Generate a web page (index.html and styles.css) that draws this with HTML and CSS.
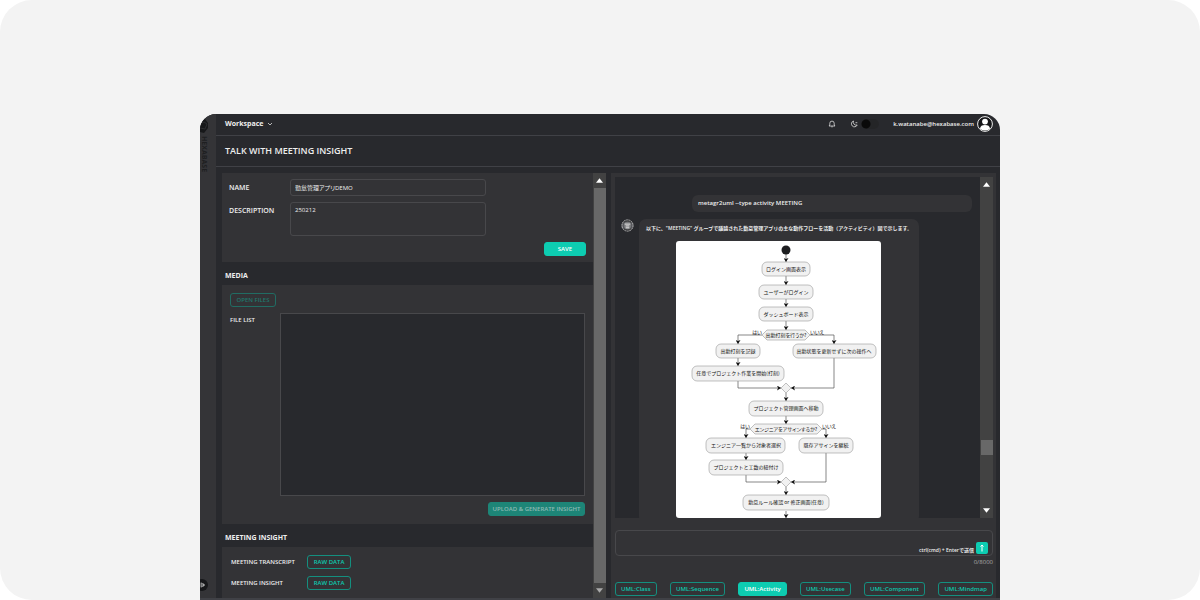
FILE: index.html
```html
<!DOCTYPE html>
<html lang="ja">
<head>
<meta charset="utf-8">
<title>Talk with Meeting Insight</title>
<link rel="stylesheet" href="styles.css">
</head>
<body>
<div class="stage">
<div class="app">
  <aside class="rail">
    <svg class="rail-logo" viewBox="0 0 8 14" aria-hidden="true"><path d="M0 2 5 0 8 4v5l-4 5-4-1z" fill="#17181a"/><path d="M0 5l4-2 3 2M0 9l5 1 2-5" fill="none" stroke="#2c2d30"/></svg>
    <span class="rail-name">HEXABASE</span>
    <button class="rail-toggle" aria-label="Expand menu"><svg viewBox="0 0 10 10"><path d="M3 5h5M5.500 2.500L8 5 5.500 7.500M4 2v2M4 6v2" fill="none" stroke="#eee"/></svg></button>
  </aside>
  <div class="main">
    <header class="topbar">
      <button class="workspace">Workspace <svg viewBox="0 0 6 6"><path d="M1 2l2 2 2-2" fill="none" stroke="#ddd" stroke-width=".8"/></svg></button>
      <div class="account">
        <button class="icon bell" aria-label="Notifications"><svg viewBox="0 0 8 8"><path d="M1 6h6L6.200 5V3.300a2.200 2.200 0 0 0-4.400 0V5zM3.300 6.800h1.400" fill="none" stroke="#ddd" stroke-width=".8"/></svg></button>
        <svg class="moon" viewBox="0 0 8 8" aria-hidden="true"><path d="M3.500 1a3 3 0 1 0 3.700 4A3 3 0 0 1 3.500 1zM5.500 2.700h1.800" fill="none" stroke="#ddd" stroke-width=".8"/></svg>
        <input class="switch" type="checkbox" aria-label="Light theme">
        <a class="mail" href="#">k.watanabe@hexabase.com</a>
        <svg class="user" viewBox="0 0 16 16" aria-hidden="true"><circle cx="8" cy="8" r="7.400" fill="#151618" stroke="#eee"/><circle cx="8" cy="5.600" r="2.900" fill="#fff"/><path d="M3 12.700C3.300 10 5 9 8 9s4.700 1 5 3.700C10.500 15 5.500 15 3 12.700z" fill="#fff"/></svg>
      </div>
    </header>
    <h1 class="title">TALK WITH MEETING INSIGHT</h1>
    <div class="panes">
      <section class="left">
        <div class="scroll">
          <form class="card info">
            <label for="name">NAME</label><input class="field" id="name" value="勤怠管理アプリDEMO">
            <label for="desc">DESCRIPTION</label><textarea class="field area" id="desc">250212</textarea>
            <button class="btn solid save" type="button">SAVE</button>
          </form>
          <h2>MEDIA</h2>
          <div class="card media">
            <button class="btn muted" type="button">OPEN FILES</button>
            <div class="files"><span class="files-label">FILE LIST</span><div class="filebox"></div></div>
            <button class="btn solid dim upload" type="button">UPLOAD &amp; GENERATE INSIGHT</button>
          </div>
          <h2>MEETING INSIGHT</h2>
          <div class="card results">
            <span>MEETING TRANSCRIPT</span><button class="btn" type="button">RAW DATA</button>
            <span>MEETING INSIGHT</span><button class="btn" type="button">RAW DATA</button>
          </div>
        </div>
        <div class="bar" aria-hidden="true">
          <svg viewBox="0 0 8 5"><path d="M4 0l4 5H0z" fill="#fff"/></svg>
          <i class="thumb long"></i>
          <svg viewBox="0 0 8 5"><path d="M0 0h8L4 5z" fill="#aaa"/></svg>
        </div>
      </section>
      <section class="right">
        <div class="chat">
          <div class="log">
            <p class="mine">metagr2uml --type activity MEETING</p>
            <div class="reply">
              <svg class="bot" viewBox="0 0 14 14" aria-hidden="true"><circle cx="7" cy="7" r="6" fill="#55565a" stroke="#c8c8c8" stroke-dasharray="2 .6"/><circle cx="7" cy="7" r="4" fill="#77787a"/><path d="M4 5.500h6M5 7.500h4M5 9.500h4" stroke="#eee"/><path d="M3 3.500c2-2 6-2 8 0M3 10.500c2 2 6 2 8 0" fill="none" stroke="#333"/></svg>
              <div class="bubble">
                <p>以下に、"MEETING" グループで議論された勤怠管理アプリの主な動作フローを活動（アクティビティ）図で示します。</p>
                <svg class="diagram" viewBox="676 241 205 277" role="img" aria-label="アクティビティ図">
                  <defs><marker id="a" viewBox="0 0 4 5" refX="4" refY="2.500" markerWidth="5" markerHeight="5" markerUnits="userSpaceOnUse" orient="auto"><path d="M0 0l4 2.500L0 5l1-2.500z" fill="#111"/></marker></defs>
                  <g class="wire">
                    <path d="M786 254v8"/><path d="M786 276v9"/><path d="M786 299v8"/><path d="M786 321v9"/>
                    <path d="M762 335h-24v9"/><path d="M810 335h24v9"/><path d="M738 358v8"/><path d="M738 381v7h43"/><path d="M834 358v30h-43"/>
                    <path d="M786 393v8"/><path d="M786 416v8"/><path d="M750 429h-4v9"/><path d="M822 429h4v9"/><path d="M746 453v7"/><path d="M746 475v7h35"/><path d="M826 453v29h-35"/>
                    <path d="M786 487v8"/><path d="M786 511v7"/>
                  </g>
                  <circle cx="786" cy="250" r="4.500" fill="#1d1e20"/>
                  <g class="node">
                    <rect x="762" y="262" width="48" height="14" rx="5"/><rect x="759" y="285" width="54" height="14" rx="5"/><rect x="759" y="307" width="54" height="14" rx="5"/>
                    <path d="M767 330h38l5 5-5 5h-38l-5-5z"/>
                    <rect x="716" y="344" width="44" height="14" rx="5"/><rect x="793" y="344" width="83" height="14" rx="5"/><rect x="692" y="366" width="92" height="15" rx="5"/>
                    <path d="M786 383l5 5-5 5-5-5z"/><rect x="749" y="401" width="74" height="15" rx="5"/>
                    <path d="M755 424h62l5 5-5 5h-62l-5-5z"/>
                    <rect x="706" y="438" width="79" height="15" rx="5"/><rect x="799" y="438" width="54" height="15" rx="5"/><rect x="709" y="460" width="74" height="15" rx="5"/>
                    <path d="M786 477l5 5-5 5-5-5z"/><rect x="743" y="495" width="86" height="15" rx="5"/>
                  </g>
                  <g class="label">
                    <text x="786" y="271">ログイン画面表示</text><text x="786" y="294">ユーザーがログイン</text><text x="786" y="316">ダッシュボード表示</text>
                    <text class="cond" x="786" y="337">出勤打刻を行うか?</text><text class="cond" x="757" y="334">はい</text><text class="cond" x="817" y="334">いいえ</text>
                    <text x="738" y="353">出勤打刻を記録</text><text x="834" y="353">出勤状態を更新せずに次の操作へ</text><text x="738" y="375">任意でプロジェクト作業を開始(打刻)</text>
                    <text x="786" y="410">プロジェクト管理画面へ移動</text>
                    <text class="cond" x="786" y="431">エンジニアをアサインするか?</text><text class="cond" x="745" y="428">はい</text><text class="cond" x="829" y="428">いいえ</text>
                    <text x="746" y="447">エンジニア一覧から対象者選択</text><text x="826" y="447">既存アサインを継続</text><text x="746" y="469">プロジェクトと工数の紐付け</text>
                    <text x="786" y="504">勤怠ルール確認 or 修正画面(任意)</text>
                  </g>
                </svg>
              </div>
            </div>
          </div>
          <div class="bar" aria-hidden="true">
            <svg viewBox="0 0 8 5"><path d="M4 0l4 5H0z" fill="#fff"/></svg>
            <i class="thumb"></i>
            <svg viewBox="0 0 8 5"><path d="M0 0h8L4 5z" fill="#fff"/></svg>
          </div>
        </div>
        <div class="composer">
          <textarea class="prompt" aria-label="Message"></textarea>
          <span class="hint">ctrl(cmd) + Enterで送信</span>
          <button class="send" aria-label="送信"><svg viewBox="0 0 12 12"><path d="M6 9.500V3M4.500 4.500L6 3l1.500 1.500" fill="none" stroke="#fff"/></svg></button>
        </div>
        <span class="count">0/8000</span>
        <nav class="modes">
          <button class="btn">UML:Class</button><button class="btn">UML:Sequence</button><button class="btn solid">UML:Activity</button><button class="btn">UML:Usecase</button><button class="btn">UML:Component</button><button class="btn">UML:Mindmap</button>
        </nav>
      </section>
    </div>
  </div>
</div>
</div>
</body>
</html>
```
FILE: styles.css
```css
* { box-sizing: border-box; margin: 0; }
body { background: #fff; color: #eee; font: 600 6px/8px "Open Sans", "Noto Sans CJK JP", sans-serif; }
button, input, textarea { font: inherit; color: inherit; padding: 0; border: 0; background: none; }
svg { display: block; }
.stage { height: 100vh; padding: 114px 200px 0; background: #f3f3f3; border-radius: 32px; overflow: hidden; }
.app { display: flex; height: 100%; background: #28292d; border-radius: 16px 16px 0 0; border-bottom: 2px solid #404146; overflow: hidden; }

.rail { display: flex; flex-direction: column; width: 16px; background: #343437; padding-top: 5px; }
.rail-logo { width: 8px; height: 14px; }
.rail-name { align-self: flex-start; margin-top: 3px; writing-mode: vertical-rl; font: 700 7px/8px "Open Sans", sans-serif; color: #1e1f21; }
.rail-toggle { margin: auto 0 7px -4px; width: 12px; height: 12px; padding: 2px; border-radius: 50%; background: #17181a; }

.main { flex: 1; min-width: 0; display: flex; flex-direction: column; }
.topbar { display: flex; align-items: center; justify-content: space-between; height: 22px; padding: 0 7px 2px 9px; border-bottom: 1px solid #404146; }
.workspace { display: flex; align-items: center; gap: 3px; font-size: 7px; font-weight: 700; }
.workspace svg { width: 6px; height: 6px; }
.account { display: flex; align-items: center; }
.icon svg, .moon { width: 8px; height: 8px; }
.moon { margin: 0 3px 0 14px; }
.switch { appearance: none; width: 18px; height: 10px; border-radius: 5px; background: radial-gradient(circle at 5px 5px, #0a0a0a 4px, #242527 5px); }
.mail { margin: 0 3px 0 14px; color: #eee; text-decoration: none; }
.user { width: 16px; height: 16px; }
.title { height: 31px; padding-left: 9px; border-bottom: 1px solid #404146; font: 600 9px/30px "Open Sans", sans-serif; }

.panes { flex: 1; min-height: 0; display: grid; grid-template: minmax(0, 1fr) / 384fr 385fr; gap: 5px; padding: 6px 4px 0 6px; }
.left { display: flex; min-width: 0; }
.scroll { flex: 1; min-width: 0; display: flex; flex-direction: column; overflow: hidden; }
.card { background: #333336; }
.info { display: grid; grid-template-columns: 61px 196px 1fr; row-gap: 6px; padding: 6px 7px; }
.info label { grid-column: 1; line-height: 17px; font-size: 7px; }
.field { width: 100%; height: 17px; padding: 0 4px; border: 1px solid #48484b; border-radius: 3px; line-height: 14px; font-weight: 400; font-feature-settings: "palt"; outline: 0; }
.area { height: 34px; resize: none; }
.save { grid-area: 3 / 3; justify-self: end; width: 42px; }
h2 { font: 700 7px/18px "Open Sans", sans-serif; padding: 5px 0 0 3px; }
.btn { height: 14px; border: 1px solid #148f7f; border-radius: 3px; color: #0cc9ae; text-align: center; line-height: 12px; }
.solid { background: #0dccb1; border-color: #0dccb1; color: #fff; }
.muted { width: 46px; border-color: #216c63; color: #20796d; }
.dim { background: #1d8577; border-color: #1d8577; color: #8dbab4; }
.media { flex: 1; display: flex; flex-direction: column; align-items: flex-start; gap: 6px; padding: 8px; }
.files { flex: 1; display: flex; align-self: stretch; }
.files-label { width: 50px; padding-top: 3px; }
.filebox { flex: 1; background: #28292d; border: 1px solid #48484b; }
.upload { align-self: flex-end; width: 97px; }
.results { display: grid; grid-template-columns: 76px 44px; align-items: center; gap: 7px 0; padding: 8px 9px; }

.bar { width: 13px; display: flex; flex-direction: column; align-items: center; background: #424242; }
.bar svg { width: 7px; height: 5px; margin: 5px 0; }
.thumb { width: 12px; height: 15px; margin-top: auto; margin-bottom: 48px; background: #686868; }
.thumb.long { flex: 1; margin: 0; }

.right { display: flex; flex-direction: column; min-width: 0; padding: 4px 3px 2px 4px; background: #333336; }
.chat { flex: 1; min-height: 0; display: flex; }
.log { flex: 1; min-width: 0; background: #28292d; padding: 18px 8px 0 6px; overflow: hidden; }
.mine { width: 280px; margin-left: auto; padding: 0 6px; border-radius: 6px; background: #333336; line-height: 17px; }
.reply { display: flex; align-items: flex-start; gap: 5px; margin-top: 7px; }
.bot { width: 13px; height: 13px; }
.bubble { width: 280px; padding: 5px 7px; border-radius: 7px; background: #333336; white-space: nowrap; }
.bubble p { font-size: 5px; }
.diagram { width: 205px; height: 277px; margin: 9px 0 0 30px; background: #fff; border-radius: 3px; }
.wire path { fill: none; stroke: #555; stroke-width: .7; marker-end: url(#a); }
.node { fill: #f1f1f1; stroke: #999; stroke-width: .6; }
.label { font: 400 5px "Noto Sans CJK JP", sans-serif; text-anchor: middle; fill: #111; }
.cond { font-feature-settings: "palt"; }

.composer { position: relative; margin-top: 12px; height: 26px; }
.prompt { display: block; width: 100%; height: 100%; border: 1px solid #48484b; border-radius: 4px; resize: none; }
.hint { position: absolute; right: 19px; bottom: 2px; font-size: 5px; }
.send { position: absolute; right: 5px; bottom: 2px; width: 12px; height: 12px; border-radius: 2px; background: #0dccb1; }
.count { align-self: flex-end; margin-top: 2px; font-weight: 400; color: #aaa; }
.modes { display: flex; justify-content: space-between; margin-top: 16px; }
.modes .btn { padding: 0 5px; }
```
